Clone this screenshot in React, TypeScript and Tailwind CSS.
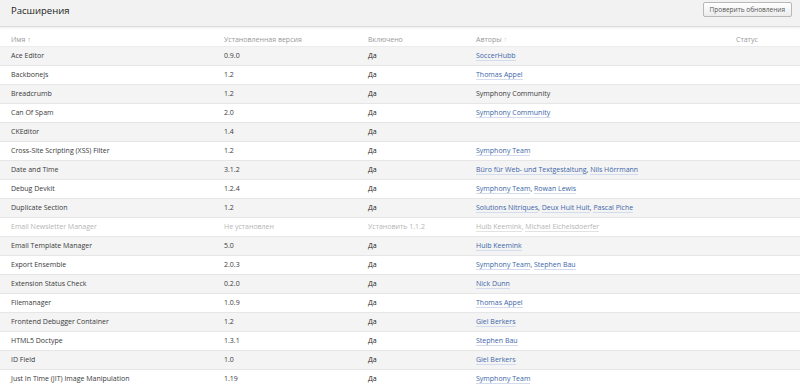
import React from 'react';

type Row = {
  name: string;
  version: string;
  enabled: string;
  authors: string[];
  linked?: boolean;
  disabled?: boolean;
};

const rows: Row[] = [
  { name: 'Ace Editor', version: '0.9.0', enabled: 'Да', authors: ['SoccerHubb'] },
  { name: 'Backbonejs', version: '1.2', enabled: 'Да', authors: ['Thomas Appel'] },
  { name: 'Breadcrumb', version: '1.2', enabled: 'Да', authors: ['Symphony Community'], linked: false },
  { name: 'Can Of Spam', version: '2.0', enabled: 'Да', authors: ['Symphony Community'] },
  { name: 'CKEditor', version: '1.4', enabled: 'Да', authors: [] },
  { name: 'Cross-Site Scripting (XSS) Filter', version: '1.2', enabled: 'Да', authors: ['Symphony Team'] },
  { name: 'Date and Time', version: '3.1.2', enabled: 'Да', authors: ['Büro für Web- und Textgestaltung', 'Nils Hörrmann'] },
  { name: 'Debug Devkit', version: '1.2.4', enabled: 'Да', authors: ['Symphony Team', 'Rowan Lewis'] },
  { name: 'Duplicate Section', version: '1.2', enabled: 'Да', authors: ['Solutions Nitriques', 'Deux Huit Huit', 'Pascal Piche'] },
  { name: 'Email Newsletter Manager', version: 'Не установлен', enabled: 'Установить 1.1.2', authors: ['Huib Keemink', 'Michael Eichelsdoerfer'], disabled: true },
  { name: 'Email Template Manager', version: '5.0', enabled: 'Да', authors: ['Huib Keemink'] },
  { name: 'Export Ensemble', version: '2.0.3', enabled: 'Да', authors: ['Symphony Team', 'Stephen Bau'] },
  { name: 'Extension Status Check', version: '0.2.0', enabled: 'Да', authors: ['Nick Dunn'] },
  { name: 'Filemanager', version: '1.0.9', enabled: 'Да', authors: ['Thomas Appel'] },
  { name: 'Frontend Debugger Container', version: '1.2', enabled: 'Да', authors: ['Giel Berkers'] },
  { name: 'HTML5 Doctype', version: '1.3.1', enabled: 'Да', authors: ['Stephen Bau'] },
  { name: 'ID Field', version: '1.0', enabled: 'Да', authors: ['Giel Berkers'] },
  { name: 'Just In Time (JIT) Image Manipulation', version: '1.19', enabled: 'Да', authors: ['Symphony Team'] },
];

export default function App() {
  return (
    <div className="w-[800px] h-[384px] overflow-hidden bg-white text-[7px] text-[#3a3a3a]" style={{ fontFamily: '"Open Sans", "Liberation Sans", sans-serif' }}>
      {/* Header */}
      <div className="h-[27px] bg-[#f2f2f2] border-b border-[#dcdcdc] shadow-[0_1px_2px_rgba(0,0,0,0.08)] flex items-center justify-between pl-[11px] pr-[8px]">
        <h1 className="text-[9.5px] text-[#222] font-normal -mt-[3px]">Расширения</h1>
        <button className="h-[15px] px-[6px] -mt-[7px] rounded-[2px] border border-[#b8b8b8] bg-gradient-to-b from-white to-[#ececec] text-[6.5px] text-[#555]">
          Проверить обновления
        </button>
      </div>

      {/* Table */}
      <div className="mt-[3px]">
        <div className="flex items-center h-[17px] border-b border-[#ececec] text-[#999] pl-[11px]">
          <div className="w-[213px] pt-[5px]">Имя ↑</div>
          <div className="w-[144px] pt-[5px]">Установленная версия</div>
          <div className="w-[108px] pt-[5px]">Включено</div>
          <div className="w-[260px] pt-[5px]">Авторы <span className="text-[#ccc]">↑</span></div>
          <div className="pt-[5px]">Статус</div>
        </div>
        {rows.map((r, i) => (
          <div
            key={r.name}
            className={`flex items-center h-[19px] border-b border-[#e6e6e6] pl-[11px] ${i % 2 === 0 ? 'bg-[#f4f4f4]' : 'bg-white'} ${r.disabled ? 'text-[#b5b5b5]' : ''}`}
          >
            <div className="w-[213px]">{r.name}</div>
            <div className="w-[144px]">{r.version}</div>
            <div className={`w-[108px] ${r.disabled ? '' : 'font-medium text-[#222]'}`}>{r.enabled}</div>
            <div className="w-[260px]">
              {r.authors.map((a, j) => (
                <span key={a}>
                  {r.linked === false ? (
                    <span>{a}</span>
                  ) : (
                    <span className={`border-b ${r.disabled ? 'text-[#b5b5b5] border-[#e2e2e2]' : 'text-[#3c66a8] border-[#d3dced]'}`}>{a}</span>
                  )}
                  {j < r.authors.length - 1 ? ', ' : ''}
                </span>
              ))}
            </div>
            <div />
          </div>
        ))}
      </div>
    </div>
  );
}
